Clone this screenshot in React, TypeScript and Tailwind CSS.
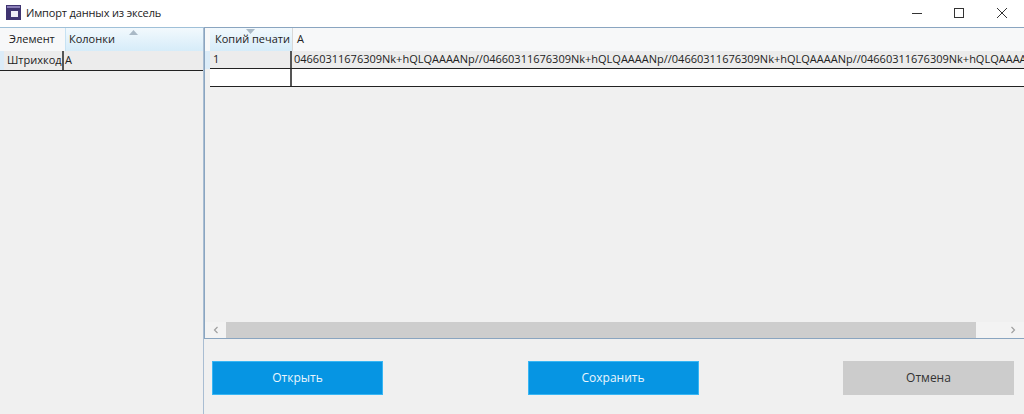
import React from 'react';

const barcode = '04660311676309Nk+hQLQAAAANp//04660311676309Nk+hQLQAAAANp//04660311676309Nk+hQLQAAAANp//04660311676309Nk+hQLQAAAANp//04660311676309Nk+hQLQAAAANp//';

const SortArrow: React.FC<{ down?: boolean; className: string }> = ({ down, className }) => (
  <svg width="9" height="5" viewBox="0 0 9 5" className={`absolute ${className}`}>
    <polygon points={down ? '0,0 9,0 4.5,5' : '4.5,0 9,5 0,5'} fill="#a9b9c6" />
  </svg>
);

const TitleBar = () => (
  <div className="h-[27px] shrink-0 flex items-center bg-white">
    <svg width="16" height="16" viewBox="0 0 16 16" className="ml-[6px] mr-[4px] -mt-[2px]">
      <rect x="0" y="0" width="15" height="15" fill="#3f3470" />
      <rect x="1" y="1" width="13" height="2" fill="#8b7fb8" />
      <rect x="5" y="6" width="7" height="6" fill="#eeecf6" />
    </svg>
    <span className="text-[11px] tracking-[-0.15px] text-[#222] -mt-[1px]">Импорт данных из эксель</span>
    <div className="ml-auto flex items-center -mt-[2px]">
      <svg width="12" height="12" viewBox="0 0 12 12" className="mr-[30px]">
        <line x1="1" y1="6.5" x2="11" y2="6.5" stroke="#333" />
      </svg>
      <svg width="12" height="12" viewBox="0 0 12 12" className="mr-[31px]">
        <rect x="1.5" y="1.5" width="9" height="9" fill="none" stroke="#333" />
      </svg>
      <svg width="12" height="12" viewBox="0 0 12 12" className="mr-[16px]">
        <path d="M1 1 L11 11 M11 1 L1 11" stroke="#333" fill="none" />
      </svg>
    </div>
  </div>
);

const LeftGrid = () => (
  <div className="w-[204px] shrink-0 border-r border-[#a9bdd2] bg-[#f0f0f0] text-[11px] text-[#222]">
    <div className="relative h-[24px] flex border-t border-[#9fc0d8]">
      <div className="w-[65px] pl-[9px] flex items-center bg-[#f7f8f9]">Элемент</div>
      <div className="flex-1 pl-[3px] flex items-center border-l border-[#c7e2f3] bg-gradient-to-b from-[#f2f9fd] to-[#d6ecf9]">Колонки</div>
      <SortArrow className="left-[129px] top-[2px]" />
    </div>
    <div className="h-[20px] flex border-b border-[#222] bg-[#ececec]">
      <div className="w-[4px] shrink-0 bg-[#dcecf8]" />
      <div className="w-[60px] pl-[3px] flex items-center border-r-2 border-[#555]">Штрихкод</div>
      <div className="flex-1 pl-[1px] flex items-center">А</div>
    </div>
  </div>
);

const RightGrid = () => (
  <div className="h-[312px] flex flex-col border-y border-l border-[#8aa5c0] bg-[#f0f0f0] text-[11px] text-[#222] overflow-hidden">
    <div className="relative h-[23px] shrink-0 flex">
      <div className="w-[5px] bg-[#f7f8f9]" />
      <div className="w-[82px] pl-[5px] flex items-center bg-gradient-to-b from-[#f2f9fd] to-[#d6ecf9]">Копий печати</div>
      <div className="flex-1 pl-[4px] flex items-center border-l border-[#d8d8d8] bg-[#f7f8f9]">A</div>
      <SortArrow down className="left-[41px] top-[1px]" />
    </div>
    <div className="h-[18px] shrink-0 flex bg-[#ececec]">
      <div className="w-[5px] shrink-0 bg-[#dcecf8]" />
      <div className="flex-1 min-w-0 flex border-b border-[#222]">
        <div className="w-[82px] shrink-0 pl-[3px] flex items-center border-r-2 border-[#555]">1</div>
        <div className="flex-1 min-w-0 pl-[2px] flex items-center whitespace-nowrap overflow-hidden">{barcode}</div>
      </div>
    </div>
    <div className="h-[18px] shrink-0 flex ml-[5px] border-b border-[#222] bg-white">
      <div className="w-[82px] shrink-0 border-r-2 border-[#555]" />
    </div>
    <div className="flex-1" />
    <div className="h-[16px] shrink-0 flex items-center bg-[#f3f3f3] text-[#a0a0a0]">
      <div className="w-[21px] shrink-0 flex justify-center">
        <svg width="6" height="8" viewBox="0 0 6 8"><path d="M4.5 1 L1.5 4 L4.5 7" fill="none" stroke="#a0a0a0" strokeWidth="1.2" /></svg>
      </div>
      <div className="w-[750px] h-full bg-[#cdcdcd]" />
      <div className="flex-1 flex justify-end pr-[8px]">
        <svg width="6" height="8" viewBox="0 0 6 8"><path d="M1.5 1 L4.5 4 L1.5 7" fill="none" stroke="#a0a0a0" strokeWidth="1.2" /></svg>
      </div>
    </div>
  </div>
);

const Footer = () => (
  <div className="flex-1 flex justify-between pt-[22px] pl-[8px] pr-[10px] bg-[#f0f0f0] text-[12px]">
    <button className="w-[171px] h-[34px] bg-[#0695e3] border border-[#38b6f4] text-[#eaf6fd]">Открыть</button>
    <button className="w-[171px] h-[34px] bg-[#0695e3] border border-[#38b6f4] text-[#eaf6fd]">Сохранить</button>
    <button className="w-[171px] h-[34px] bg-[#cccccc] text-[#333]">Отмена</button>
  </div>
);

export default function App() {
  return (
    <div className="w-[1024px] h-[414px] flex flex-col overflow-hidden bg-[#f0f0f0] font-['Open_Sans','Noto_Sans',sans-serif]">
      <TitleBar />
      <div className="flex-1 flex min-h-0">
        <LeftGrid />
        <div className="flex-1 min-w-0 flex flex-col">
          <RightGrid />
          <Footer />
        </div>
      </div>
    </div>
  );
}
